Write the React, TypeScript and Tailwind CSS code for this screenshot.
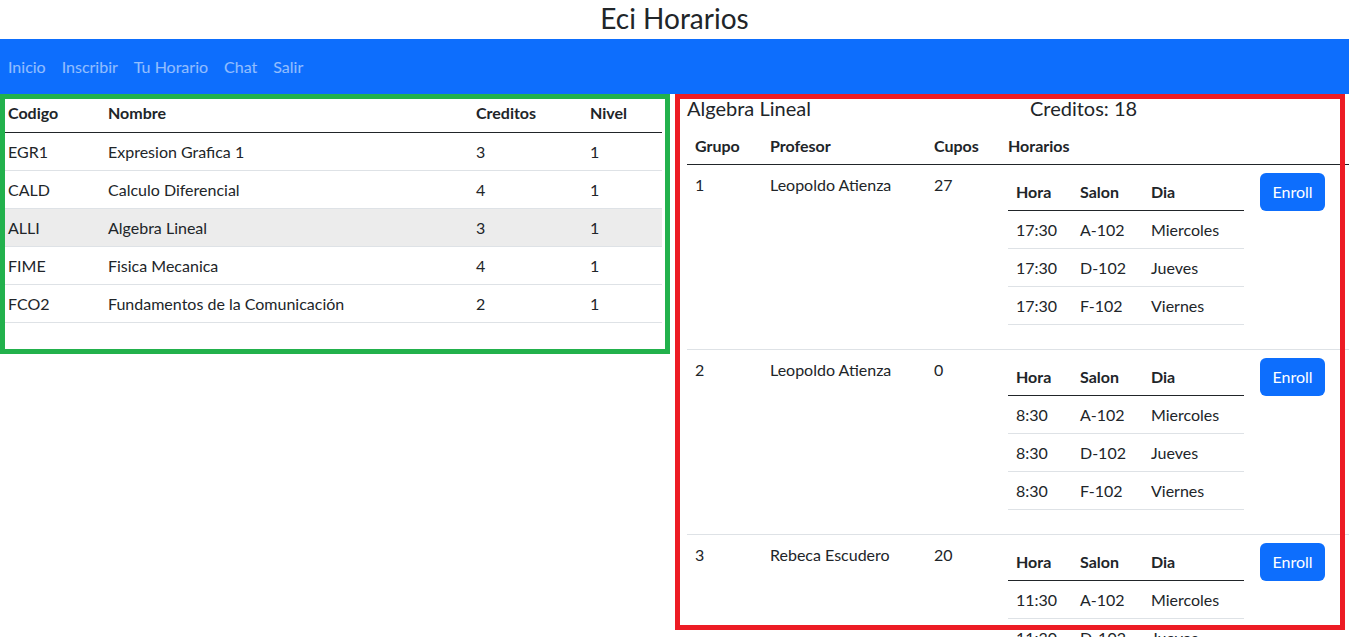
import React from 'react';

/**
 * Eci Horarios
 *
 * Course list on the left, groups of the selected course on the right.
 */

type Course = { code: string; name: string; credits: number; level: number };
type Slot = { hour: string; room: string; day: string };
type Group = { id: number; teacher: string; seats: number; slots: Slot[] };

const courses: Course[] = [
  { code: 'EGR1', name: 'Expresion Grafica 1', credits: 3, level: 1 },
  { code: 'CALD', name: 'Calculo Diferencial', credits: 4, level: 1 },
  { code: 'ALLI', name: 'Algebra Lineal', credits: 3, level: 1 },
  { code: 'FIME', name: 'Fisica Mecanica', credits: 4, level: 1 },
  { code: 'FCO2', name: 'Fundamentos de la Comunicación', credits: 2, level: 1 },
];

const days = ['Miercoles', 'Jueves', 'Viernes'];
const rooms = ['A-102', 'D-102', 'F-102'];
const makeSlots = (hour: string): Slot[] =>
  days.map((day, i) => ({ hour, room: rooms[i], day }));

const groups: Group[] = [
  { id: 1, teacher: 'Leopoldo Atienza', seats: 27, slots: makeSlots('17:30') },
  { id: 2, teacher: 'Leopoldo Atienza', seats: 0, slots: makeSlots('8:30') },
  { id: 3, teacher: 'Rebeca Escudero', seats: 20, slots: makeSlots('11:30') },
];

const navLinks = ['Inicio', 'Inscribir', 'Tu Horario', 'Chat', 'Salir'];

export default function App() {
  const selected = 'ALLI';

  return (
    <div className="relative h-[637px] w-[1349px] overflow-hidden bg-white font-['Segoe_UI','Lato',sans-serif] text-[16px] text-[#212529]">
      {/* Title */}
      <h3 className="h-[39px] text-center text-[28px] leading-[36px]">Eci Horarios</h3>

      {/* Navbar */}
      <nav className="flex h-[55px] items-center bg-[#0d6efd]">
        {navLinks.map((link) => (
          <a key={link} className="px-2 leading-6 text-white/55">
            {link}
          </a>
        ))}
      </nav>

      <div className="flex">
        {/* Courses */}
        <div className="w-[662px] shrink-0">
          <table className="w-full border-collapse">
            <thead>
              <tr className="border-b border-[#212529]">
                <th className="w-[100px] px-2 py-[7px] text-left leading-6 font-bold">Codigo</th>
                <th className="w-[368px] px-2 py-[7px] text-left leading-6 font-bold">Nombre</th>
                <th className="w-[114px] px-2 py-[7px] text-left leading-6 font-bold">Creditos</th>
                <th className="px-2 py-[7px] text-left leading-6 font-bold">Nivel</th>
              </tr>
            </thead>
            <tbody>
              {courses.map((c) => (
                <tr
                  key={c.code}
                  className={`border-b border-[#dee2e6] ${c.code === selected ? 'bg-[#ececec]' : ''}`}
                >
                  <td className="px-2 py-[6.5px] leading-6">{c.code}</td>
                  <td className="px-2 py-[6.5px] leading-6">{c.name}</td>
                  <td className="px-2 py-[6.5px] leading-6">{c.credits}</td>
                  <td className="px-2 py-[6.5px] leading-6">{c.level}</td>
                </tr>
              ))}
            </tbody>
          </table>
        </div>

        {/* Groups of the selected course */}
        <div className="ml-[25px] shrink-0">
          <div className="flex h-[33px] pt-[2px] text-[20px] leading-6">
            <div className="w-[343px]">Algebra Lineal</div>
            <div>Creditos: 18</div>
          </div>

          <table className="w-[700px] border-collapse">
            <thead>
              <tr className="border-b border-[#212529]">
                <th className="w-[75px] px-2 py-[6.5px] text-left leading-6 font-bold">Grupo</th>
                <th className="w-[164px] px-2 py-[6.5px] text-left leading-6 font-bold">Profesor</th>
                <th className="w-[74px] px-2 py-[6.5px] text-left leading-6 font-bold">Cupos</th>
                <th className="w-[252px] px-2 py-[6.5px] text-left leading-6 font-bold">Horarios</th>
                <th className="px-2 py-[6.5px]"></th>
              </tr>
            </thead>
            <tbody>
              {groups.map((g) => (
                <tr key={g.id} className="border-b border-[#dee2e6] align-top">
                  <td className="p-2 leading-6">{g.id}</td>
                  <td className="p-2 leading-6">{g.teacher}</td>
                  <td className="p-2 leading-6">{g.seats}</td>
                  <td className="p-2">
                    <table className="mb-4 w-[236px] border-collapse">
                      <thead>
                        <tr className="border-b border-[#212529]">
                          <th className="w-[64px] px-2 py-[6.5px] text-left leading-6 font-bold">Hora</th>
                          <th className="w-[71px] px-2 py-[6.5px] text-left leading-6 font-bold">Salon</th>
                          <th className="px-2 py-[6.5px] text-left leading-6 font-bold">Dia</th>
                        </tr>
                      </thead>
                      <tbody>
                        {g.slots.map((s) => (
                          <tr key={s.day} className="border-b border-[#dee2e6]">
                            <td className="px-2 py-[6.5px] leading-6">{s.hour}</td>
                            <td className="px-2 py-[6.5px] leading-6">{s.room}</td>
                            <td className="px-2 py-[6.5px] leading-6">{s.day}</td>
                          </tr>
                        ))}
                      </tbody>
                    </table>
                  </td>
                  <td className="p-2">
                    <button className="h-[38px] w-[65px] rounded-md bg-[#0d6efd] leading-6 text-white">
                      Enroll
                    </button>
                  </td>
                </tr>
              ))}
            </tbody>
          </table>
        </div>
      </div>

      {/* Annotation boxes drawn over the screenshot */}
      <div className="pointer-events-none absolute left-0 top-[94px] h-[260px] w-[670px] border-[5px] border-[#22b14c]" />
      <div className="pointer-events-none absolute left-[675px] top-[94px] h-[536px] w-[670px] border-[5px] border-[#ed1c24]" />
    </div>
  );
}
